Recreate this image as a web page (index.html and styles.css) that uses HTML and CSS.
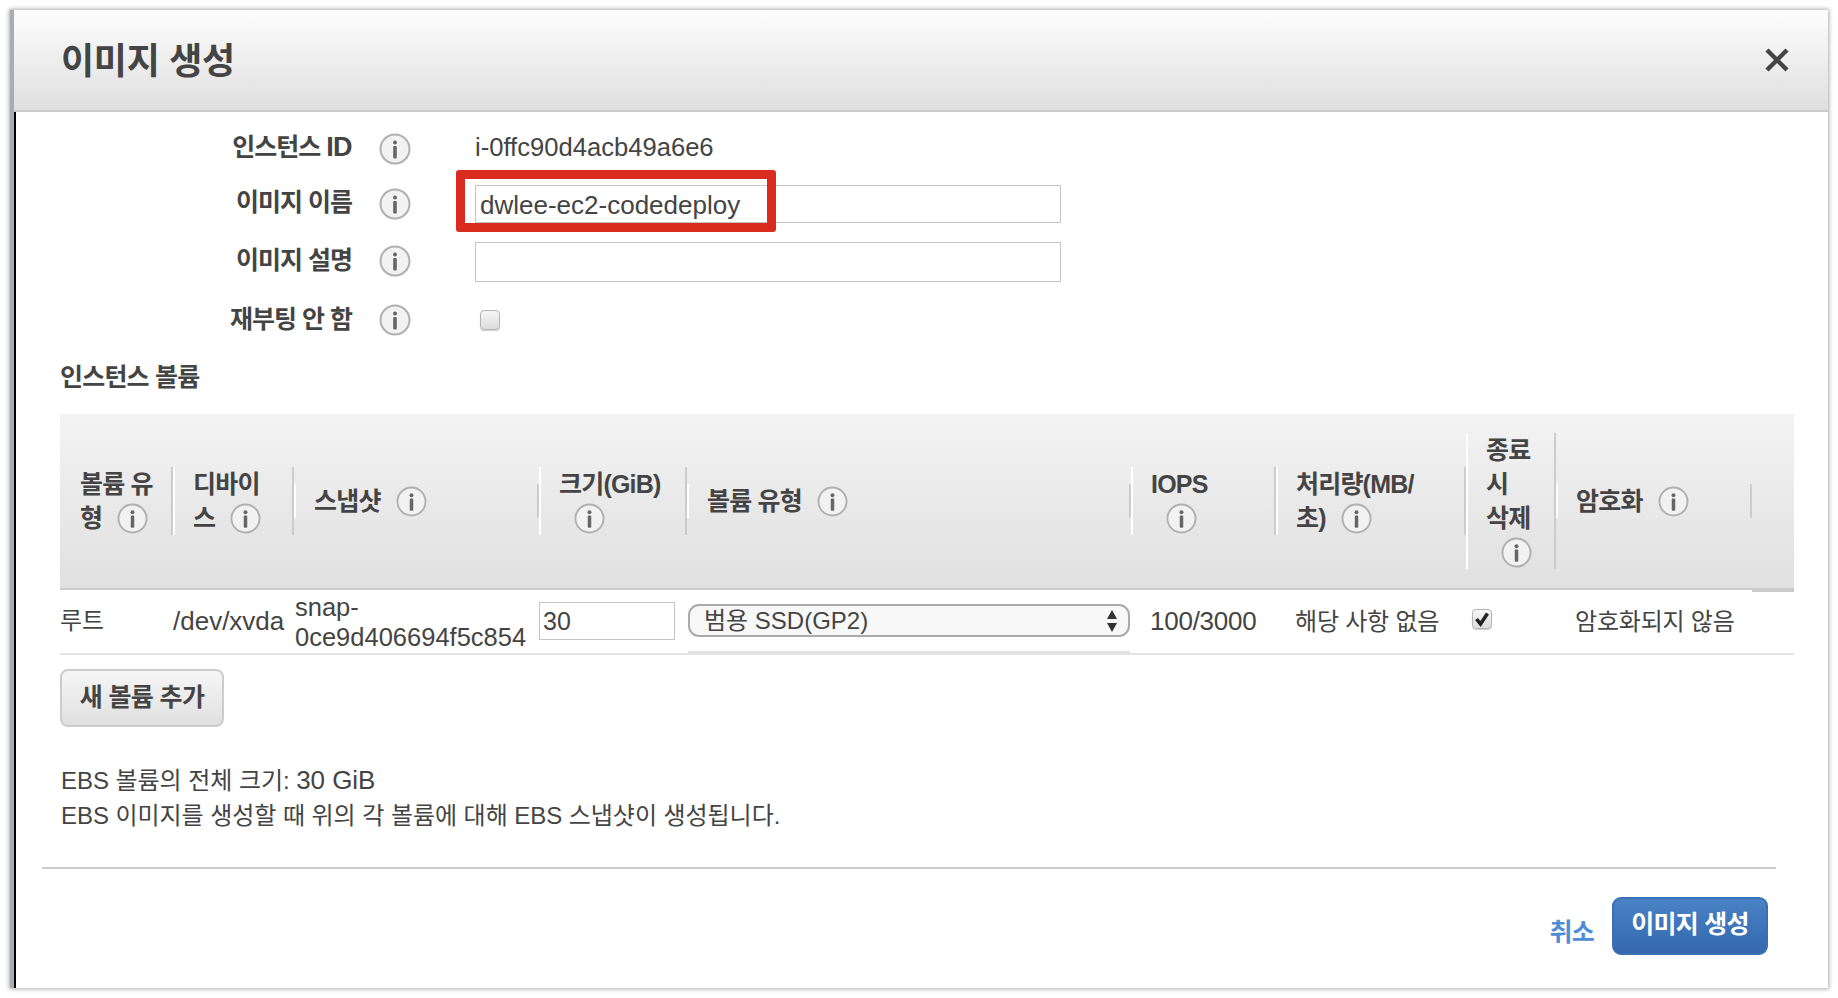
FILE: index.html
```html
<!DOCTYPE html>
<html lang="ko">
<head>
<meta charset="utf-8">
<title>이미지 생성</title>
<link rel="stylesheet" href="styles.css">
</head>
<body>
<svg class="defs" width="0" height="0" aria-hidden="true">
  <symbol id="info" viewBox="0 0 32 32">
    <circle cx="16" cy="16" r="14.5" fill="#f2f2f2" stroke="#b0b0b0" stroke-width="2"/>
    <circle cx="16" cy="9.5" r="2" fill="#666"/>
    <rect x="14.2" y="13" width="3.6" height="12.5" rx="1" fill="#666"/>
  </symbol>
</svg>
<div class="dialog">
  <header class="head">
    <h1 class="title">이미지 생성</h1>
    <svg class="close" viewBox="0 0 24 24" width="24" height="24" aria-label="닫기">
      <path d="M2 2 22 22M22 2 2 22" stroke="#444" stroke-width="4.4" fill="none"/>
    </svg>
  </header>
  <main class="body">
    <section class="form">
      <div class="label">인스턴스 <span class="label-id">ID</span></div>
      <svg class="info"><use href="#info"/></svg>
      <div class="value">i-0ffc90d4acb49a6e6</div>

      <div class="label">이미지 이름</div>
      <svg class="info"><use href="#info"/></svg>
      <div class="control">
        <input class="text-input" type="text" value="dwlee-ec2-codedeploy">
        <div class="highlight"></div>
      </div>

      <div class="label">이미지 설명</div>
      <svg class="info"><use href="#info"/></svg>
      <div class="control"><input class="text-input tall" type="text"></div>

      <div class="label">재부팅 안 함</div>
      <svg class="info"><use href="#info"/></svg>
      <div class="control"><span class="check"></span></div>
    </section>

    <h2 class="section-title">인스턴스 볼륨</h2>

    <table class="volumes">
      <colgroup>
        <col class="c1"><col class="c2"><col class="c3"><col class="c4"><col class="c5">
        <col class="c6"><col class="c7"><col class="c8"><col class="c9"><col class="c10">
      </colgroup>
      <thead>
        <tr>
          <th class="first"><div class="th-in">볼륨 유<br>형<svg class="info th-info"><use href="#info"/></svg></div></th>
          <th><div class="th-in">디바이<br>스<svg class="info th-info"><use href="#info"/></svg></div></th>
          <th><div class="th-in">스냅샷<svg class="info th-info"><use href="#info"/></svg></div></th>
          <th><div class="th-in">크기(GiB)<br><svg class="info th-info"><use href="#info"/></svg></div></th>
          <th><div class="th-in">볼륨 유형<svg class="info th-info"><use href="#info"/></svg></div></th>
          <th><div class="th-in">IOPS<br><svg class="info th-info"><use href="#info"/></svg></div></th>
          <th><div class="th-in">처리량(MB/<br>초)<svg class="info th-info"><use href="#info"/></svg></div></th>
          <th><div class="th-in">종료<br>시<br>삭제<br><svg class="info th-info"><use href="#info"/></svg></div></th>
          <th><div class="th-in">암호화<svg class="info th-info"><use href="#info"/></svg></div></th>
          <th class="filler"></th>
        </tr>
      </thead>
      <tbody>
        <tr>
          <td class="root">루트</td>
          <td class="latin dev">/dev/xvda</td>
          <td class="snap">snap-<br>0ce9d406694f5c854</td>
          <td class="size"><input class="size-input" type="text" value="30"></td>
          <td class="type">
            <div class="type-wrap">
              <div class="select">
                <span>범용 SSD(GP2)</span>
                <svg class="arrows" viewBox="0 0 12 24" width="12" height="24"><path d="M6 1 11 10H1ZM6 23 1 14H11Z" fill="#333"/></svg>
              </div>
            </div>
          </td>
          <td class="pad19 latin">100/3000</td>
          <td class="pad19 hangul">해당 사항 없음</td>
          <td class="del">
            <span class="check checked">
              <svg viewBox="0 0 20 20" width="20" height="20"><path d="M4.5 10 8.5 15 15.5 4.5" stroke="#222" stroke-width="3.6" fill="none"/></svg>
            </span>
          </td>
          <td class="pad20 hangul" colspan="2">암호화되지 않음</td>
        </tr>
      </tbody>
    </table>

    <button class="add" type="button">새 볼륨 추가</button>

    <p class="note">EBS 볼륨의 전체 크기: <span class="note-size">30 GiB</span><br>EBS 이미지를 생성할 때 위의 각 볼륨에 대해 EBS 스냅샷이 생성됩니다.</p>

    <hr class="rule">

    <footer class="foot">
      <a class="cancel">취소</a>
      <button class="primary" type="button">이미지 생성</button>
    </footer>
  </main>
</div>
</body>
</html>
```
FILE: styles.css
```css
* { box-sizing: border-box; }
html, body { margin: 0; height: 100%; }
body {
  background: #fff;
  padding: 10px 10px 10px 10px;
  font-family: "Liberation Sans", "Noto Sans CJK KR", sans-serif;
  font-size: 24px;
  color: #444;
}
.defs { position: absolute; }
.dialog {
  height: 978px;
  border-left: 4px solid #a9adb0;
  display: flex;
  flex-direction: column;
  background: #fff;
  box-shadow: 0 0 4px 1px #aaa;
}
.head {
  height: 102px;
  flex: none;
  background: linear-gradient(#fdfdfd, #dfdfdf);
  border-bottom: 2px solid #ccc;
  display: flex;
  align-items: center;
  justify-content: space-between;
  padding: 0 39px 0 47px;
}
.title { margin: 0 0 4px; font-size: 36px; font-weight: bold; color: #444; letter-spacing: -.3px; }
.close { display: block; margin-bottom: 0; }
.body {
  flex: 1;
  border-left: 2px solid #000;
  display: flex;
  flex-direction: column;
  padding: 12px 0 0;
}
.form {
  display: grid;
  grid-template-columns: 336px 27px 32px 64px 1fr;
  grid-template-rows: 49px 61px 54px 64px;
  align-items: center;
}
.form .label { grid-column: 1; text-align: right; font-size: 25px; font-weight: bold; letter-spacing: -1px; padding-bottom: 7px; }
.label-id { font-size: 27px; letter-spacing: -.6px; }
.form .info { grid-column: 3; }
.form .value, .form .control { grid-column: 5; }
.info { width: 32px; height: 32px; display: block; }
.value { font-size: 25.6px; padding-bottom: 3px; }
.control { position: relative; display: flex; align-items: center; }
.text-input {
  width: 586px;
  height: 38px;
  border: 1px solid #c4c4c4;
  padding: 3px 4px 0;
  font: 26px "Liberation Sans", sans-serif;
  color: #444;
  background: #fff;
  outline: none;
}
.tall { height: 40px; margin-top: 2px; }
.highlight {
  position: absolute;
  left: -19px;
  top: -15px;
  width: 320px;
  height: 62px;
  border: 9px solid #d92c1f;
  border-radius: 3px;
}
.check {
  display: block;
  width: 20px;
  height: 20px;
  margin-left: 5px;
  border: 1px solid #b5b5b5;
  border-radius: 4px;
  background: linear-gradient(#f6f6f6, #dcdcdc);
  box-shadow: 0 1px 1px #ccc;
}
.check svg { display: block; margin: -1px; }
.section-title { margin: 0 0 14px 44px; height: 48px; line-height: 50px; font-size: 25px; font-weight: bold; letter-spacing: -.8px; }
.volumes {
  margin-left: 44px;
  width: 1734px;
  table-layout: fixed;
  border-collapse: separate;
  border-spacing: 0;
}
.c1 { width: 113px; } .c2 { width: 121px; } .c3 { width: 245px; } .c4 { width: 148px; } .c5 { width: 444px; }
.c6 { width: 145px; } .c7 { width: 190px; } .c8 { width: 90px; } .c9 { width: 196px; } .c10 { width: 42px; }
.volumes th {
  height: 176px;
  padding: 0;
  background: linear-gradient(#f3f3f3, #e0e0e0);
  border-bottom: 2px solid #ccc;
  text-align: left;
  vertical-align: middle;
  font-size: 25px;
  font-weight: bold;
  line-height: 34px;
  letter-spacing: -.8px;
}
.th-in {
  border-left: 2px solid #fff;
  border-right: 2px solid #ccc;
  padding-left: 18px;
}
.first .th-in { border-left-color: transparent; }
.th-info { display: inline-block; vertical-align: -7px; margin-left: 15px; height: 31px; width: 31px; }
.filler { box-shadow: 0 2px 0 #ccc; }
.volumes td {
  padding: 0;
  height: 65px;
  border-bottom: 2px solid #e2e2e2;
  white-space: nowrap;
  vertical-align: middle;
}
.volumes .latin { font-size: 26px; letter-spacing: -.25px; }
.volumes .dev { letter-spacing: 0; }
.volumes .hangul { padding-bottom: 5px; letter-spacing: -.2px; }
.volumes .root { padding-bottom: 7px; letter-spacing: -.2px; }
.volumes .snap { font-size: 25.5px; line-height: 30px; padding-left: 1px; }
.volumes .size { padding: 0 0 1px; }
.size-input {
  display: block;
  width: 136px;
  height: 38px;
  border: 1px solid #c4c4c4;
  padding: 0 3px;
  font: 25px "Liberation Sans", sans-serif;
  color: #444;
  outline: none;
}
.volumes .type { padding: 0 1px 0 1px; vertical-align: bottom; }
.type-wrap { padding: 14px 0 14px; border-bottom: 2px solid #e2e2e2; }
.select {
  height: 33px;
  border: 2px solid #aaa;
  border-radius: 11px;
  background: #f8f8f8;
  display: flex;
  align-items: center;
  justify-content: space-between;
  padding: 0 10px 0 14px;
  line-height: 1;
}
.arrows { display: block; }
.volumes .pad19 { padding-left: 19px; }
.volumes .pad20 { padding-left: 19px; }
.volumes .del { padding: 0 0 6px 6px; }
.del .check { margin-left: 0; }
.add {
  margin: 14px 0 0 44px;
  width: 164px;
  height: 58px;
  border: 2px solid #ccc;
  border-radius: 8px;
  background: linear-gradient(#f6f6f6, #e0e0e0);
  font: bold 25px "Liberation Sans", "Noto Sans CJK KR", sans-serif;
  color: #444;
  letter-spacing: -.6px;
  padding: 0 0 6px;
}
.note { margin: 36px 0 0 45px; line-height: 35px; font-size: 24px; letter-spacing: -.05px; }
.note-size { font-size: 26px; }
.rule { margin: 34px 52px 0 26px; border: 0; border-top: 2px solid #ccc; height: 0; }
.foot {
  display: flex;
  justify-content: flex-end;
  align-items: center;
  padding: 28px 60px 0 0;
  gap: 18px;
}
.cancel { color: #4f8ed6; font-size: 25px; font-weight: bold; padding-top: 7px; letter-spacing: -.7px; }
.primary {
  width: 156px;
  height: 58px;
  border: 2px solid #3a6fb5;
  border-radius: 9px;
  background: linear-gradient(#4a82c4, #3368ae);
  color: #fff;
  font: bold 25px "Liberation Sans", "Noto Sans CJK KR", sans-serif;
  letter-spacing: -.7px;
  padding: 0 0 8px;
}
```
